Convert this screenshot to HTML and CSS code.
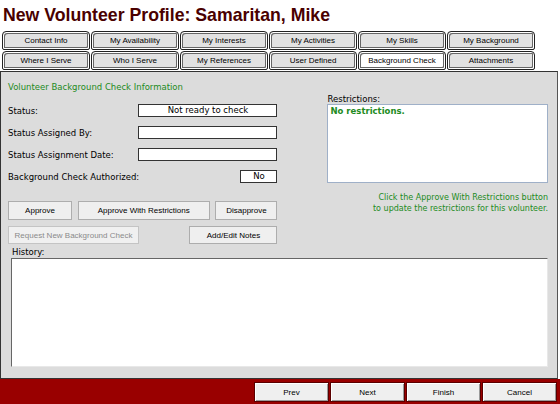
FILE: index.html
```html
<!DOCTYPE html>
<html lang="en">

<head>
    <meta charset="UTF-8">
    <title>New Volunteer Profile</title>
    <link rel="stylesheet" href="styles.css">
</head>

<body>
    <h1 class="page-title">New Volunteer Profile: Samaritan, Mike</h1>

    <!-- Profile tabs -->
    <div class="tabs">
        <div class="tab">Contact Info</div>
        <div class="tab">My Availability</div>
        <div class="tab">My Interests</div>
        <div class="tab">My Activities</div>
        <div class="tab">My Skills</div>
        <div class="tab">My Background</div>
        <div class="tab">Where I Serve</div>
        <div class="tab">Who I Serve</div>
        <div class="tab">My References</div>
        <div class="tab">User Defined</div>
        <div class="tab active">Background Check</div>
        <div class="tab">Attachments</div>
    </div>

    <!-- Background check panel -->
    <div class="panel">
        <div class="upper">
            <div class="left-col">
                <div class="section-title">Volunteer Background Check Information</div>

                <div class="fields">
                    <div class="field-row">
                        <span class="label">Status:</span>
                        <span class="value">Not ready to check</span>
                    </div>
                    <div class="field-row">
                        <span class="label">Status Assigned By:</span>
                        <span class="value"></span>
                    </div>
                    <div class="field-row">
                        <span class="label">Status Assignment Date:</span>
                        <span class="value"></span>
                    </div>
                    <div class="field-row">
                        <span class="label">Background Check Authorized:</span>
                        <span class="value small">No</span>
                    </div>
                </div>

                <div class="button-row first">
                    <button class="btn w-approve">Approve</button>
                    <button class="btn w-restrict">Approve With Restrictions</button>
                    <button class="btn w-disapprove">Disapprove</button>
                </div>
                <div class="button-row second">
                    <button class="btn w-request" disabled>Request New Background Check</button>
                    <button class="btn w-notes">Add/Edit Notes</button>
                </div>
            </div>

            <div class="right-col">
                <div class="restrict-label">Restrictions:</div>
                <div class="restrict-box">No restrictions.</div>
                <div class="restrict-hint">
                    Click the Approve With Restrictions button<br>
                    to update the restrictions for this volunteer.
                </div>
            </div>
        </div>

        <div class="history">
            <div class="history-label">History:</div>
            <div class="history-box"></div>
        </div>
    </div>

    <!-- Wizard footer -->
    <div class="footer">
        <button class="nav-btn">Prev</button>
        <button class="nav-btn">Next</button>
        <button class="nav-btn">Finish</button>
        <button class="nav-btn">Cancel</button>
    </div>
</body>

</html>
```

FILE: styles.css
```css
body {
    margin: 0;
    width: 560px;
    height: 404px;
    overflow: hidden;
    background-color: #fff;
    font-family: "DejaVu Sans", Verdana, sans-serif;
    font-size: 8.5px;
    color: #000;
}

.page-title {
    margin: 0;
    padding: 5px 0 0 3px;
    height: 27px;
    box-sizing: border-box;
    font-family: "Liberation Sans", Arial, sans-serif;
    font-size: 17.7px;
    line-height: 21px;
    font-weight: bold;
    color: #4a0000;
}

/* Tabs */
.tabs {
    display: grid;
    grid-template-columns: repeat(6, 88px);
    column-gap: 1px;
    row-gap: 1px;
    padding: 4px 0 0 2px;
}

.tab {
    height: 19px;
    box-sizing: border-box;
    border: 1px solid #222;
    border-radius: 4px 4px 2px 2px;
    box-shadow: inset 1px 1px 0 #fff, inset -1px -1px 0 #fff, inset 2px 2px 0 #666, inset -2px -2px 0 #666;
    background-color: #e2e2e2;
    font-family: "Liberation Sans", Arial, sans-serif;
    font-size: 8px;
    line-height: 17px;
    text-align: center;
    color: #000;
}

.tab.active {
    background-color: #fff;
}

/* Panel */
.panel {
    margin-top: 1px;
    width: 558px;
    height: 308px;
    box-sizing: border-box;
    border: 1px solid #333;
    border-right-color: #555;
    background-color: #dcdcdc;
    padding: 0 9px 0 7px;
}

.upper {
    display: flex;
}

.left-col {
    width: 270px;
}

.section-title {
    margin-top: 9px;
    height: 12px;
    line-height: 12px;
    color: #228b22;
}

.fields {
    margin-top: 11px;
    display: flex;
    flex-direction: column;
    gap: 9px;
}

.field-row {
    display: flex;
    justify-content: space-between;
    align-items: center;
    height: 13px;
}

.value {
    width: 139px;
    height: 13px;
    box-sizing: border-box;
    border: 1px solid #333;
    background-color: #fff;
    text-align: center;
    line-height: 11px;
}

.value.small {
    width: 37px;
}

.button-row {
    display: flex;
    justify-content: space-between;
}

.button-row.first {
    margin-top: 18px;
}

.button-row.second {
    margin-top: 6px;
}

.btn {
    height: 19px;
    padding: 0;
    border: 1px solid #adadad;
    background-color: #efefef;
    font-family: "Liberation Sans", Arial, sans-serif;
    font-size: 8px;
    white-space: nowrap;
    color: #000;
}

.button-row.second .btn {
    height: 18px;
}

.btn:disabled {
    color: #8a8a8a;
    border-color: #c4c4c4;
    background-color: #f0f0f0;
}

.w-approve {
    width: 64px;
}

.w-restrict {
    width: 132px;
}

.w-disapprove {
    width: 62px;
}

.w-request {
    width: 131px;
}

.w-notes {
    width: 88px;
}

.right-col {
    margin-left: 50px;
    width: 221px;
}

.restrict-label {
    margin-top: 23px;
    height: 9px;
    line-height: 9px;
}

.restrict-box {
    height: 79px;
    box-sizing: border-box;
    border: 1px solid #9fb0c8;
    background-color: #fff;
    padding: 1px 2px;
    font-weight: bold;
    color: #228b22;
}

.restrict-hint {
    margin-top: 9px;
    text-align: right;
    font-size: 8px;
    line-height: 11px;
    color: #228b22;
}

/* History */
.history {
    margin: 2px 0 0 3px;
    width: 537px;
}

.history-label {
    padding-left: 1px;
    height: 12px;
    line-height: 12px;
}

.history-box {
    height: 109px;
    box-sizing: border-box;
    border: 1px solid #e8e8e8;
    border-top-color: #666;
    border-left-color: #666;
    background-color: #fff;
}

/* Footer */
.footer {
    height: 25px;
    box-sizing: border-box;
    background-color: #990000;
    display: flex;
    justify-content: flex-end;
    align-items: flex-start;
    gap: 1px;
    padding: 3px 3px 0 0;
}

.nav-btn {
    width: 75px;
    height: 20px;
    padding: 0;
    border: 1px solid #5a0000;
    box-shadow: inset 1px 1px 0 #fff, inset -1px -1px 0 #9a9a9a;
    background-color: #efefef;
    font-family: "Liberation Sans", Arial, sans-serif;
    font-size: 8px;
    color: #000;
}
```
